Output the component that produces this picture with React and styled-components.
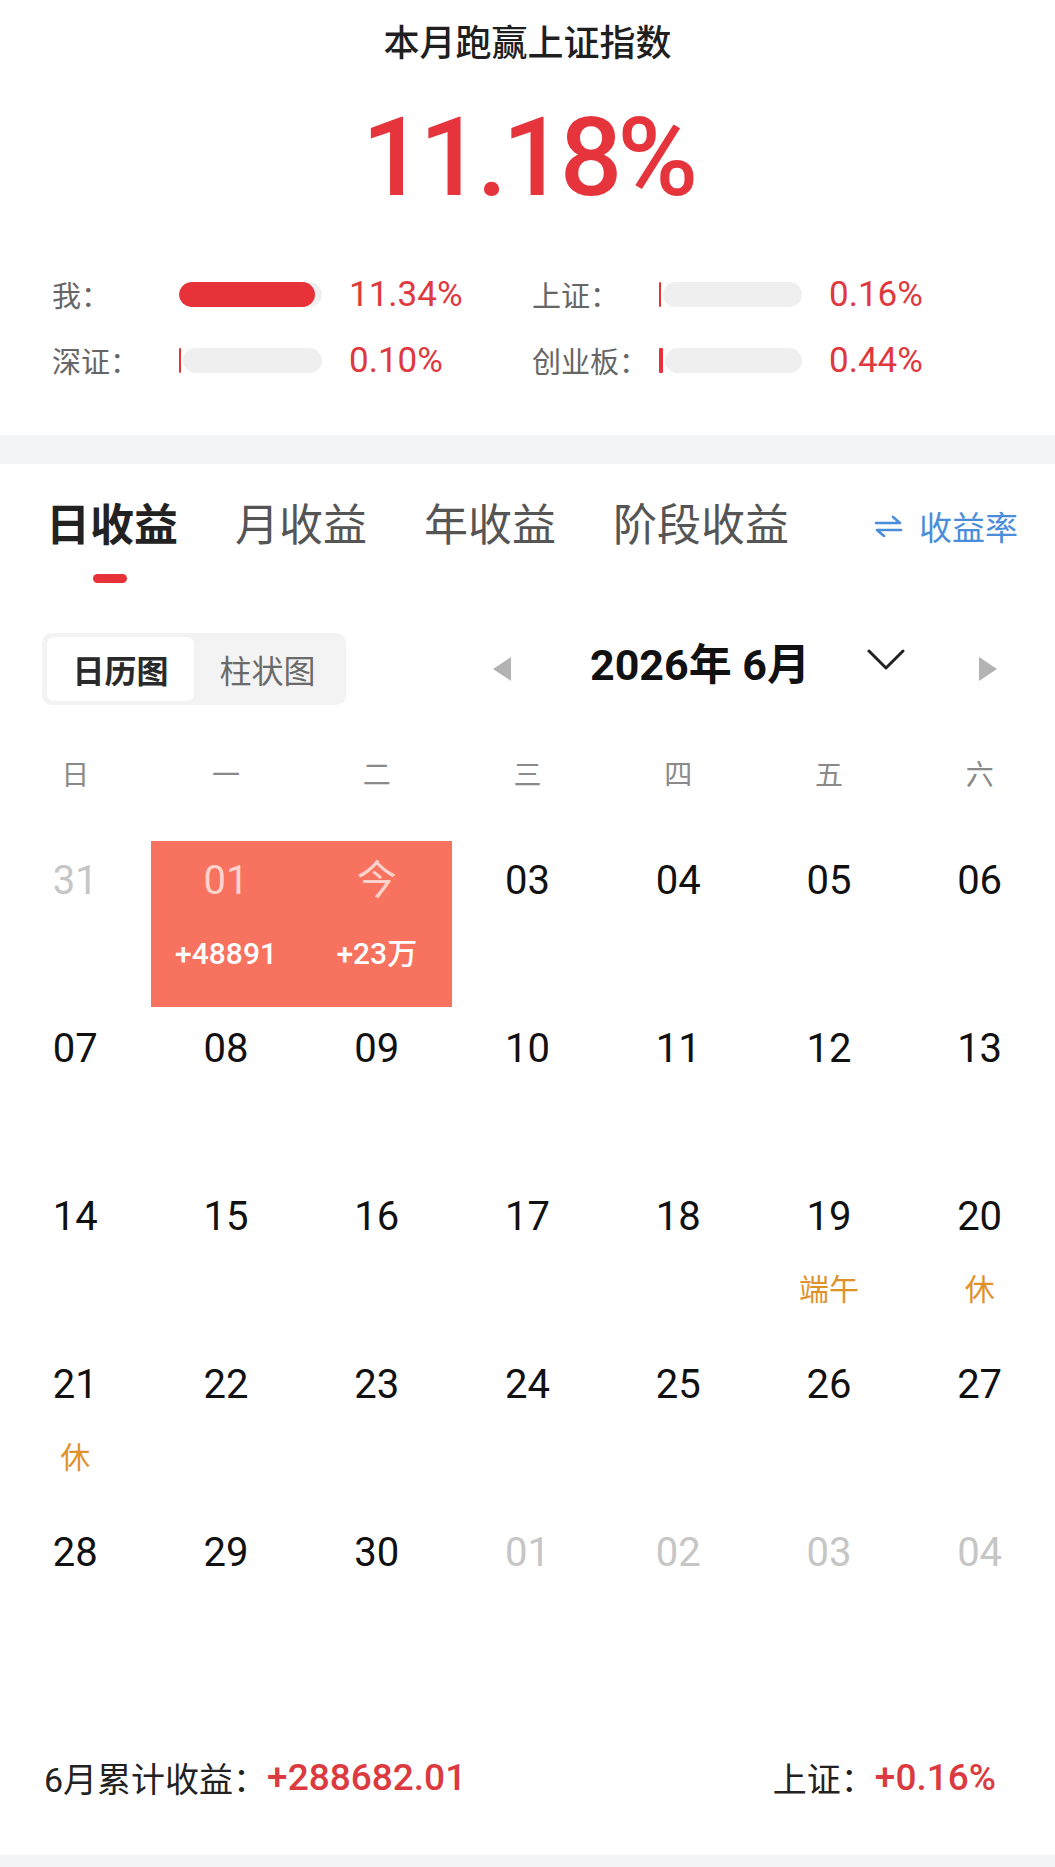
import styled, { createGlobalStyle } from "styled-components";

const GlobalStyle = createGlobalStyle`
  html, body {
    margin: 0;
    padding: 0;
    background: #f3f4f6;
  }
  body {
    font-family: Roboto, "Noto Sans CJK SC", sans-serif;
    color: #222;
  }
`;

const Page = styled.div`
  width: 1055px;
  height: 1855px;
  background: #fff;
  display: flex;
  flex-direction: column;
`;

/* ---------- top summary ---------- */

const Summary = styled.section`
  display: flex;
  flex-direction: column;
  align-items: center;
  padding: 22px 0 56px;
`;

const Title = styled.h1`
  margin: 0;
  font-size: 36px;
  line-height: 44px;
  font-weight: 500;
  color: #1f1f1f;
`;

const BigNumber = styled.div`
  margin-top: 37px;
  font-size: 110px;
  line-height: 110px;
  font-weight: 500;
  letter-spacing: -5px;
  color: #e5343b;
`;

const StatsGrid = styled.div`
  align-self: stretch;
  margin-top: 60px;
  padding-left: 52px;
  display: grid;
  grid-template-columns: 480px 1fr;
  row-gap: 26px;
`;

const StatItem = styled.div`
  display: grid;
  grid-template-columns: 127px 143px auto;
  align-items: center;
  height: 40px;
`;

const StatLabel = styled.span`
  font-size: 29px;
  color: #666;
`;

const Bar = styled.div`
  display: flex;
  align-items: stretch;
  height: 25px;
`;

const ThinMark = styled.div`
  flex-shrink: 0;
  margin-right: 2px;
  background: #e8323a;
  border-radius: 1px;
`;

const Track = styled.div`
  flex: 1;
  border-radius: 13px;
  background: #efefef;
  overflow: hidden;
  display: flex;
`;

const Fill = styled.div`
  height: 100%;
  background: #e8323a;
  border-radius: 13px;
`;

const StatValue = styled.span`
  padding-left: 27px;
  font-size: 35px;
  color: #e0383f;
`;

const Band = styled.div`
  height: 29px;
  background: #f3f4f6;
  flex-shrink: 0;
`;

/* ---------- tabs ---------- */

const Tabs = styled.nav`
  display: flex;
  align-items: flex-start;
  padding: 36px 37px 0 46px;
  gap: 57px;
`;

const Tab = styled.div`
  display: flex;
  flex-direction: column;
  align-items: center;
  font-size: 44px;
  line-height: 52px;
  font-weight: ${(p) => (p.$active ? 700 : 400)};
  color: ${(p) => (p.$active ? "#222" : "#555")};

  &::after {
    content: "";
    width: 34px;
    height: 9px;
    margin-top: 22px;
    margin-right: 4px;
    border-radius: 5px;
    background: ${(p) => (p.$active ? "#e8323a" : "transparent")};
  }
`;

const RateLink = styled.div`
  margin-left: auto;
  display: flex;
  align-items: center;
  gap: 16px;
  height: 52px;
  font-size: 33px;
  color: #4a8ddb;
`;

/* ---------- toolbar ---------- */

const Toolbar = styled.div`
  display: flex;
  align-items: center;
  margin-top: 50px;
  padding-left: 42px;
`;

const Segmented = styled.div`
  display: flex;
  width: 304px;
  height: 72px;
  box-sizing: border-box;
  padding: 4px 5px;
  border-radius: 10px;
  background: #f3f3f3;
`;

const Segment = styled.div`
  flex: 1;
  display: flex;
  align-items: center;
  justify-content: center;
  border-radius: 7px;
  font-size: 32px;
  font-weight: ${(p) => (p.$active ? 700 : 400)};
  color: ${(p) => (p.$active ? "#2a2a2a" : "#6a6a6a")};
  background: ${(p) => (p.$active ? "#fff" : "transparent")};
`;

const MonthNav = styled.div`
  display: flex;
  align-items: center;
  margin-left: 147px;
`;

const MonthTitle = styled.div`
  margin-left: 79px;
  margin-top: -16px;
  font-size: 43px;
  font-weight: 700;
  color: #111;
  white-space: pre;
`;

const Chevron = styled.svg`
  margin-left: 57px;
  margin-top: -20px;
`;

const NextArrow = styled.svg`
  margin-left: 74px;
`;

/* ---------- calendar ---------- */

const WeekHeader = styled.div`
  display: grid;
  grid-template-columns: repeat(7, 1fr);
  margin-top: 51px;
  height: 40px;
  line-height: 40px;
  font-size: 28px;
  color: #8a8a8a;
  text-align: center;
`;

const CalendarGrid = styled.div`
  display: grid;
  grid-template-columns: repeat(7, 1fr);
  grid-auto-rows: 166px;
  row-gap: 2px;
  margin-top: 45px;
`;

const Cell = styled.div`
  display: flex;
  flex-direction: column;
  align-items: center;
  padding-top: 16px;
  background: ${(p) => (p.$hl ? "#f7725f" : "transparent")};
`;

const DayNum = styled.div`
  font-size: 40px;
  line-height: 48px;
  color: ${(p) => (p.$hl ? "rgba(255,255,255,0.7)" : p.$muted ? "#c6c6c6" : "#111")};
`;

const SubLabel = styled.div`
  margin-top: 31px;
  font-size: 30px;
  line-height: 36px;
  font-weight: ${(p) => (p.$hl ? 500 : 400)};
  color: ${(p) => (p.$hl ? "#fff" : "#e0922a")};
`;

/* ---------- footer ---------- */

const Footer = styled.footer`
  margin-top: auto;
  margin-bottom: 56px;
  display: flex;
  justify-content: space-between;
  align-items: center;
  padding: 0 59px 0 44px;
  height: 44px;
`;

const FooterGroup = styled.div`
  display: flex;
  align-items: center;
  font-size: 34px;
  color: #222;
`;

const FooterValue = styled.span`
  font-size: 37px;
  font-weight: 500;
  color: #db3a40;
`;

const stats = [
  { label: "我：", pct: 95, value: "11.34%" },
  { label: "上证：", mark: 2, value: "0.16%" },
  { label: "深证：", mark: 2, value: "0.10%" },
  { label: "创业板：", mark: 4, value: "0.44%" },
];

const weeks = ["日", "一", "二", "三", "四", "五", "六"];

const days = [
  { n: "31", muted: true },
  { n: "01", hl: true, sub: "+48891" },
  { n: "今", hl: true, sub: "+23万" },
  { n: "03" }, { n: "04" }, { n: "05" }, { n: "06" },
  { n: "07" }, { n: "08" }, { n: "09" }, { n: "10" }, { n: "11" }, { n: "12" }, { n: "13" },
  { n: "14" }, { n: "15" }, { n: "16" }, { n: "17" }, { n: "18" },
  { n: "19", sub: "端午" }, { n: "20", sub: "休" },
  { n: "21", sub: "休" }, { n: "22" }, { n: "23" }, { n: "24" }, { n: "25" }, { n: "26" }, { n: "27" },
  { n: "28" }, { n: "29" }, { n: "30" },
  { n: "01", muted: true }, { n: "02", muted: true }, { n: "03", muted: true }, { n: "04", muted: true },
];

function SwapIcon() {
  return (
    <svg width="29" height="22" viewBox="0 0 29 22" fill="none" stroke="#4a8ddb" strokeWidth="2.6" strokeLinecap="round" strokeLinejoin="round">
      <path d="M2 8 H26 L19 2" />
      <path d="M27 15 H3 L10 21" />
    </svg>
  );
}

export default function App() {
  return (
    <>
      <GlobalStyle />
      <Page>
        <Summary>
          <Title>本月跑赢上证指数</Title>
          <BigNumber>11.18%</BigNumber>
          <StatsGrid>
            {stats.map((s) => (
              <StatItem key={s.label}>
                <StatLabel>{s.label}</StatLabel>
                <Bar>
                  {s.mark && <ThinMark style={{ width: s.mark }} />}
                  <Track>
                    {s.pct && <Fill style={{ width: `${s.pct}%` }} />}
                  </Track>
                </Bar>
                <StatValue>{s.value}</StatValue>
              </StatItem>
            ))}
          </StatsGrid>
        </Summary>

        <Band />

        <Tabs>
          <Tab $active>日收益</Tab>
          <Tab>月收益</Tab>
          <Tab>年收益</Tab>
          <Tab>阶段收益</Tab>
          <RateLink>
            <SwapIcon />
            收益率
          </RateLink>
        </Tabs>

        <Toolbar>
          <Segmented>
            <Segment $active>日历图</Segment>
            <Segment>柱状图</Segment>
          </Segmented>
          <MonthNav>
            <svg width="18" height="24" viewBox="0 0 18 24">
              <polygon points="18,0 18,24 0,12" fill="#b3b3b3" />
            </svg>
            <MonthTitle>2026年 6月</MonthTitle>
            <Chevron width="38" height="21" viewBox="0 0 38 21" fill="none" stroke="#222" strokeWidth="3" strokeLinecap="round" strokeLinejoin="round">
              <polyline points="2,2 19,19 36,2" />
            </Chevron>
            <NextArrow width="18" height="24" viewBox="0 0 18 24">
              <polygon points="0,0 0,24 18,12" fill="#b3b3b3" />
            </NextArrow>
          </MonthNav>
        </Toolbar>

        <WeekHeader>
          {weeks.map((w) => (
            <span key={w}>{w}</span>
          ))}
        </WeekHeader>

        <CalendarGrid>
          {days.map((d, i) => (
            <Cell key={i} $hl={d.hl}>
              <DayNum $hl={d.hl} $muted={d.muted}>{d.n}</DayNum>
              {d.sub && <SubLabel $hl={d.hl}>{d.sub}</SubLabel>}
            </Cell>
          ))}
        </CalendarGrid>

        <Footer>
          <FooterGroup>
            6月累计收益：<FooterValue>+288682.01</FooterValue>
          </FooterGroup>
          <FooterGroup>
            上证：<FooterValue>+0.16%</FooterValue>
          </FooterGroup>
        </Footer>
      </Page>
    </>
  );
}
